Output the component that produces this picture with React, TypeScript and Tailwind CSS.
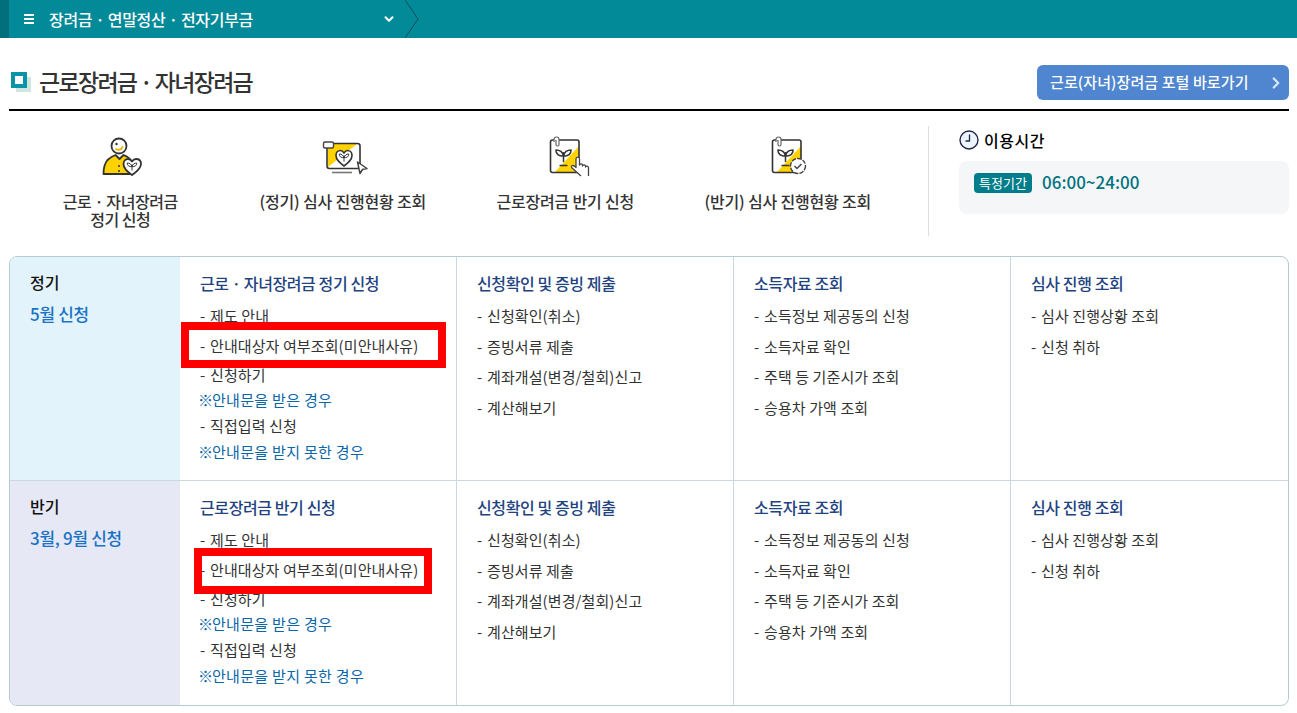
import React from 'react';
import { ChevronDown, ChevronRight } from 'lucide-react';

const Sprout = ({ x, y, s = 1 }: { x: number; y: number; s?: number }) => (
  <g transform={`translate(${x} ${y}) scale(${s})`} fill="none" stroke="#333" strokeWidth="1.6" strokeLinecap="round" strokeLinejoin="round">
    <path d="M0 3v9" />
    <path d="M0 6C-1 2-4 0-8 0c0 4 3 7 8 6z" />
    <path d="M0 6C1 2 4 0 8 0c0 4-3 7-8 6z" />
  </g>
);

const PersonIcon = () => (
  <svg width="45" height="45" viewBox="0 0 45 45" fill="none" className="ml-[4px]">
    <path d="M3.5 39c0-6 1.500-11 4-14 2-2 5-4 8-5l4 4 4-4c3 1 6 3 8 6v13H4.500a1 1 0 0 1-1-1z" fill="#ffd200" stroke="#333" strokeWidth="1.8" strokeLinejoin="round" />
    <circle cx="19" cy="11" r="7.500" fill="#fff" stroke="#333" strokeWidth="1.8" />
    <path d="M16 14c2 1.500 5 1 6.500-2" stroke="#f0b400" strokeWidth="1.8" strokeLinecap="round" />
    <circle cx="16.500" cy="9" r="1.200" fill="#333" />
    <circle cx="19" cy="31" r="1" fill="#333" />
    <circle cx="19" cy="36" r="1" fill="#333" />
    <path d="M32 40c-4-3-8.500-6-8.500-11 0-3 2-5 4.500-5 2 0 3 1 4 2.500 1-1.500 2-2.500 4-2.500 3 0 5 2 5 5 0 5-5 8-9 11z" fill="#fff" stroke="#333" strokeWidth="1.800" strokeLinejoin="round" />
    <Sprout x={32} y={28} s={0.6} />
  </svg>
);

const ScreenIcon = () => (
  <svg width="50" height="45" viewBox="0 0 50 45" fill="none" className="ml-[6px]">
    <rect x="7" y="9" width="32" height="24" rx="2" fill="#fff" />
    <path d="M7 32V9h29z" fill="#ffd200" />
    <rect x="6" y="8.500" width="33" height="25" rx="2.500" stroke="#333" strokeWidth="1.600" />
    <rect x="2.500" y="7" width="10" height="6" rx="1.500" fill="#fff" stroke="#444" strokeWidth="1.400" />
    <path d="M23 31c-4-3-8-6-8-10.500 0-3 2-5 4.500-5 1.500 0 2.500 1 3.500 2.500 1-1.500 2-2.500 3.500-2.500 2.500 0 4.500 2 4.500 5 0 4.500-4 7.500-8 10.500z" fill="#fff" stroke="#333" strokeWidth="1.600" strokeLinejoin="round" />
    <Sprout x={23} y={19} s={0.6} />
    <path d="M11 37.500h20" stroke="#777" strokeWidth="1.600" />
    <path d="M36.500 27l9.500 6.500-4.500 1-2.500 4z" fill="#fff" stroke="#444" strokeWidth="1.500" strokeLinejoin="round" />
  </svg>
);

const NoteBase = () => (
  <>
    <rect x="4" y="5" width="28" height="32" rx="2" fill="#fff" />
    <path d="M8 37L32 11v26z" fill="#ffd200" />
    <rect x="3.500" y="5" width="28.500" height="32.500" rx="2" stroke="#333" strokeWidth="1.600" />
    <path d="M7 7V4.500a2.500 2.500 0 0 1 5 0v5a1.500 1.500 0 0 1-3 0V5" fill="#fff" stroke="#666" strokeWidth="1.200" />
    <Sprout x={16.500} y={15} s={0.95} />
    <path d="M12.500 30.500h8" stroke="#333" strokeWidth="1.500" />
  </>
);

const NoteHandIcon = () => (
  <svg width="45" height="45" viewBox="0 0 45 45" fill="none" className="ml-[9px]">
    <NoteBase />
    <path d="M34 41l-9-8c-1.500-2 .5-3.500 3-1.500l1 1V24c0-2.500 3.500-2.500 3.500 0v6c0-1.500 3-1.500 3 0v1c0-1.500 3-1.500 3 0v1c0-1.500 3-1 3 .5V41" fill="#fff" stroke="#444" strokeWidth="1.300" strokeLinejoin="round" />
  </svg>
);

const NoteCheckIcon = () => (
  <svg width="45" height="45" viewBox="0 0 45 45" fill="none" className="ml-[7px]">
    <NoteBase />
    <circle cx="29" cy="31" r="7.500" fill="#fff" stroke="#444" strokeWidth="1.400" strokeDasharray="4.500 1.200" />
    <path d="M25.500 31l2.500 2.500 4.500-4.500" stroke="#444" strokeWidth="1.500" fill="none" />
  </svg>
);

const ClockIcon = () => (
  <svg width="20" height="20" viewBox="0 0 20 20" fill="none">
    <circle cx="10" cy="10" r="9" fill="#eaf6fb" stroke="#2b2350" strokeWidth="1.400" />
    <path d="M10.500 4.500V11H6.500" stroke="#2b2350" strokeWidth="1.300" />
  </svg>
);

const quick = [
  { icon: <PersonIcon />, label: '근로 · 자녀장려금 정기 신청', width: 'w-[130px] tracking-[-0.45px]' },
  { icon: <ScreenIcon />, label: '(정기) 심사 진행현황 조회', width: 'w-[200px] tracking-[-0.2px]' },
  { icon: <NoteHandIcon />, label: '근로장려금 반기 신청', width: 'w-[200px] tracking-[-0.2px]' },
  { icon: <NoteCheckIcon />, label: '(반기) 심사 진행현황 조회', width: 'w-[200px] tracking-[-0.2px]' },
];

const confirmCol = { title: '신청확인 및 증빙 제출', items: ['신청확인(취소)', '증빙서류 제출', '계좌개설(변경/철회)신고', '계산해보기'] };
const incomeCol = { title: '소득자료 조회', items: ['소득정보 제공동의 신청', '소득자료 확인', '주택 등 기준시가 조회', '승용차 가액 조회'] };
const reviewCol = { title: '심사 진행 조회', items: ['심사 진행상황 조회', '신청 취하'] };

const Item = ({ text, h = 'h-[30.5px]' }: { text: string; h?: string }) => (
  <li className={`flex ${h} items-center text-[15px] tracking-[0.1px] text-[#333]`}>
    <span className="w-[10px] shrink-0">-</span>
    {text}
  </li>
);

const Column = ({ title, items }: { title: string; items: string[] }) => (
  <div className="border-l border-[#c9d9de] pt-[14px] pl-[20px]">
    <h3 className="mb-[6px] h-[24px] text-[16px] leading-[24px] font-medium tracking-[-0.4px] text-[#23437f]">{title}</h3>
    <ul>
      {items.map((t) => (
        <Item key={t} text={t} />
      ))}
    </ul>
  </div>
);

const Note = ({ text, h }: { text: string; h: string }) => (
  <li className={`flex ${h} items-center text-[15px] tracking-[0.3px] text-[#0b66a8]`}>
    <span className="-ml-[2px] w-[15px] shrink-0 tracking-[0]">※</span>
    <span className="-ml-[1px]">{text}</span>
  </li>
);

const FirstColumn = ({ title, box }: { title: string; box: string }) => (
  <div className="relative pt-[14px] pl-[20px]">
    <h3 className="mb-[6px] h-[24px] text-[16px] leading-[24px] font-medium tracking-[-0.4px] text-[#23437f]">{title}</h3>
    <ul>
      <Item text="제도 안내" h="h-[30px]" />
      <Item text="안내대상자 여부조회(미안내사유)" h="h-[30px]" />
      <Item text="신청하기" h="h-[28px]" />
      <Note text="안내문을 받은 경우" h="h-[23px]" />
      <Item text="직접입력 신청" h="h-[28px]" />
      <Note text="안내문을 받지 못한 경우" h="h-[24px]" />
    </ul>
    <div className={box} />
  </div>
);

const Row = ({ bg, name, period, first, box, top }: { bg: string; name: string; period: string; first: string; box: string; top?: boolean }) => (
  <div className={`grid grid-cols-[170px_276px_277px_277px_1fr] ${top ? 'h-[223px]' : 'h-[225px] border-t border-[#c9d9de]'}`}>
    <div className={`${bg} pt-[13px] pl-[20px]`}>
      <div className="h-[24px] text-[16px] leading-[24px] font-medium text-[#111]">{name}</div>
      <div className="mt-[8px] text-[17px] leading-[24px] font-medium tracking-[-0.3px] text-[#1a73c4]">{period}</div>
    </div>
    <FirstColumn title={first} box={box} />
    <Column {...confirmCol} />
    <Column {...incomeCol} />
    <Column {...reviewCol} />
  </div>
);

export default function App() {
  return (
    <div className="h-[713px] w-[1297px] overflow-hidden bg-white font-['Noto_Sans_CJK_KR','Noto_Sans',sans-serif]">
      <header className="flex h-[38px] bg-[#028a99]">
        <div className="w-[9px] bg-[#016f7c]" />
        <div className="flex w-[396px] items-center pl-[15px] text-white">
          <span className="flex h-[10px] w-[10px] flex-col justify-between">
            <span className="h-[2px] bg-white" />
            <span className="h-[2px] bg-white" />
            <span className="h-[2px] bg-white" />
          </span>
          <span className="ml-[15px] text-[16px] font-medium tracking-[-0.3px]">장려금 · 연말정산 · 전자기부금</span>
          <ChevronDown size={14} strokeWidth={3.500} className="mr-[9px] ml-auto" />
        </div>
        <svg width="16" height="38" viewBox="0 0 16 38" fill="none">
          <path d="M0 0l13 19L0 38" stroke="#0b4f5c" strokeWidth="1" />
        </svg>
      </header>

      <div className="mr-[8px] ml-[9px] flex h-[73px] items-start justify-between border-b-2 border-black pt-[27px]">
        <div className="flex h-[35px] items-center">
          <span className="relative ml-[2px] h-[21px] w-[21px]">
            <span className="absolute top-[5px] left-[5px] h-[15px] w-[15px] bg-[#cfe5e0]" />
            <span className="absolute top-0 left-0 h-[16px] w-[16px] border-[4px] border-[#0a93a6] bg-white" />
          </span>
          <h2 className="mb-[2px] ml-[7px] text-[23px] font-medium tracking-[-1.7px] text-[#333]">근로장려금 · 자녀장려금</h2>
        </div>
        <a className="flex h-[35px] w-[252px] items-center justify-between rounded-[6px] bg-[#4f86cf] pr-[4px] pl-[13px] text-[15px] font-medium tracking-[0.1px] text-white">
          근로(자녀)장려금 포털 바로가기
          <ChevronRight size={18} strokeWidth={3} className="text-[#dbe7f6]" />
        </a>
      </div>

      <section className="mt-[15px] mr-[8px] ml-[9px] flex h-[110px]">
        <div className="grid w-[890px] grid-cols-4 pt-[9px]">
          {quick.map((q) => (
            <div key={q.label} className="flex flex-col items-center">
              <div className="flex h-[45px] items-center">{q.icon}</div>
              <div className={`mt-[12px] text-center text-[16px] leading-[18px] font-medium break-keep text-[#333] ${q.width}`}>{q.label}</div>
            </div>
          ))}
        </div>
        <div className="ml-[29px] w-px bg-[#ddd]" />
        <div className="ml-[30px] flex-1 pt-[4px]">
          <div className="flex h-[20px] items-center gap-[5px] text-[16px] font-medium tracking-[0.5px] text-black">
            <ClockIcon />
            이용시간
          </div>
          <div className="mt-[11px] flex h-[53px] items-start gap-[10px] rounded-[8px] bg-[#f4f6f8] pt-[12px] pl-[15px]">
            <span className="flex h-[20px] w-[58px] items-center justify-center rounded-[4px] bg-[#007d8a] text-[13px] text-white">특정기간</span>
            <span className="-mt-px text-[17px] leading-[20px] font-medium text-[#00727f]">06:00~24:00</span>
          </div>
        </div>
      </section>

      <div className="mt-[20px] mr-[8px] ml-[9px] h-[450px] overflow-hidden rounded-[8px] border border-[#b5cbd1]">
        <Row
          top
          bg="bg-[#e3f3fb]"
          name="정기"
          period="5월 신청"
          first="근로 · 자녀장려금 정기 신청"
          box="absolute top-[65px] left-[1px] h-[46px] w-[265px] border-[8px] border-[#ff0000]"
        />
        <Row
          bg="bg-[#e6e8f6]"
          name="반기"
          period="3월, 9월 신청"
          first="근로장려금 반기 신청"
          box="absolute top-[67px] left-[14px] h-[46px] w-[238px] border-[8px] border-[#ff0000]"
        />
      </div>
    </div>
  );
}
